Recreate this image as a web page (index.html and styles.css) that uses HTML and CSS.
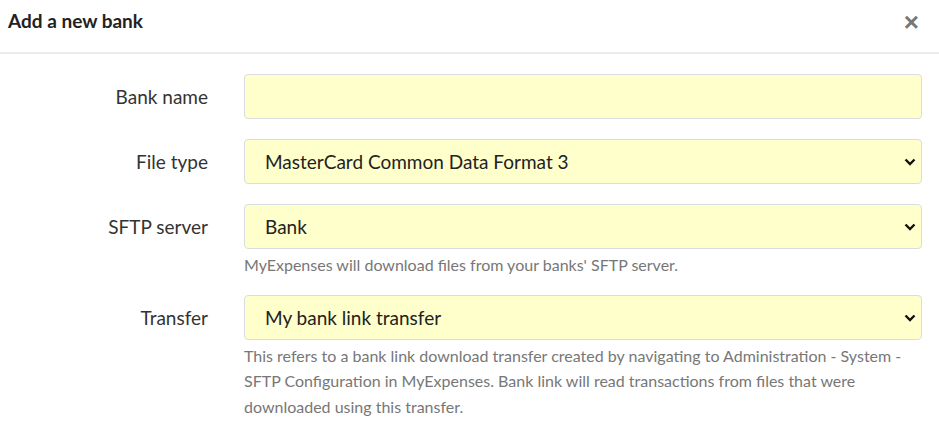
FILE: index.html
```html
<!DOCTYPE html>
<html lang="en">
<head>
    <meta charset="UTF-8">
    <meta name="viewport" content="width=device-width, initial-scale=1.0">
    <title>Add a new bank</title>
    <link rel="stylesheet" href="styles.css">
</head>
<body>
    <div class="modal">
        <div class="modal-header">
            <h1>Add a new bank</h1>
            <button class="close" type="button" aria-label="Close">&times;</button>
        </div>

        <form class="bank-form">
            <label class="field-label" for="bankName">Bank name</label>
            <div class="field">
                <input type="text" id="bankName" class="control">
            </div>

            <label class="field-label" for="fileType">File type</label>
            <div class="field">
                <div class="select-wrap">
                    <select id="fileType" class="control">
                        <option>MasterCard Common Data Format 3</option>
                    </select>
                    <svg class="chevron" width="12" height="8" viewBox="0 0 12 8"><path d="M1.5 1.5 6 6 10.5 1.5" fill="none" stroke="#111" stroke-width="2.4"/></svg>
                </div>
            </div>

            <label class="field-label" for="sftpServer">SFTP server</label>
            <div class="field">
                <div class="select-wrap">
                    <select id="sftpServer" class="control">
                        <option>Bank</option>
                    </select>
                    <svg class="chevron" width="12" height="8" viewBox="0 0 12 8"><path d="M1.5 1.5 6 6 10.5 1.5" fill="none" stroke="#111" stroke-width="2.4"/></svg>
                </div>
                <p class="help">MyExpenses will download files from your banks' SFTP server.</p>
            </div>

            <label class="field-label" for="transfer">Transfer</label>
            <div class="field">
                <div class="select-wrap">
                    <select id="transfer" class="control">
                        <option>My bank link transfer</option>
                    </select>
                    <svg class="chevron" width="12" height="8" viewBox="0 0 12 8"><path d="M1.5 1.5 6 6 10.5 1.5" fill="none" stroke="#111" stroke-width="2.4"/></svg>
                </div>
                <p class="help">This refers to a bank link download transfer created by navigating to Administration - System - SFTP Configuration in MyExpenses. Bank link will read transactions from files that were downloaded using this transfer.</p>
            </div>
        </form>
    </div>
</body>
</html>
```

FILE: styles.css
```css
body {
    margin: 0;
    background: #fff;
    font-family: Lato, "Open Sans", sans-serif;
    color: #333;
}

.modal-header {
    display: flex;
    align-items: center;
    justify-content: space-between;
    height: 52px;
    padding: 0 20px 0 8px;
    border-bottom: 2px solid #e9ecef;
}

.modal-header h1 {
    margin: 0 0 12px;
    font-size: 19px;
    font-weight: 700;
    color: #222;
}

.close {
    background: none;
    border: none;
    padding: 0;
    margin-bottom: 8px;
    font-family: Arial, sans-serif;
    font-size: 26px;
    font-weight: 700;
    color: #777;
    cursor: pointer;
}

.bank-form {
    display: grid;
    grid-template-columns: 208px 1fr;
    column-gap: 36px;
    row-gap: 20px;
    padding: 20px 17px 0 0;
}

.field-label {
    text-align: right;
    font-size: 19px;
    height: 45px;
    line-height: 45px;
    color: #333;
}

.control {
    display: block;
    width: 100%;
    box-sizing: border-box;
    height: 45px;
    padding: 0 40px 0 20px;
    background: #ffffcc;
    border: 1px solid #d9dde1;
    border-radius: 4px;
    font-family: inherit;
    font-size: 19px;
    color: #222;
    appearance: none;
    -webkit-appearance: none;
}

.select-wrap {
    position: relative;
}

.chevron {
    position: absolute;
    right: 6px;
    top: 19px;
    pointer-events: none;
}

.help {
    margin: 3px 0 -3px;
    font-size: 16px;
    line-height: 25.5px;
    color: #777;
}
```
